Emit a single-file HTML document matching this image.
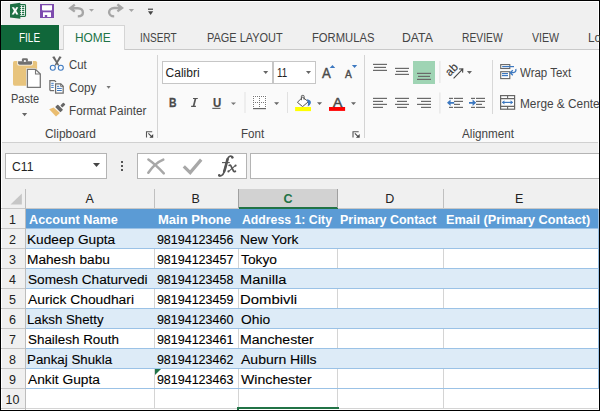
<!DOCTYPE html>
<html><head><meta charset="utf-8"><style>
html,body{margin:0;padding:0;width:600px;height:411px;overflow:hidden;background:#F0F0F0}
.b{position:absolute;display:block}
.t{position:absolute;white-space:pre;transform-origin:0 0;font-family:"Liberation Sans",sans-serif}
</style></head><body>
<div class="b" style="left:0px;top:0px;width:600px;height:411px;background:#F0F0F0;"></div><div class="b" style="left:1px;top:1px;width:598px;height:1px;background:#FFF;"></div><div class="b" style="left:1px;top:1px;width:1px;height:409px;background:#FFF;"></div><div class="b" style="left:598px;top:1px;width:1px;height:409px;background:#FFF;"></div><div class="b" style="left:1px;top:409px;width:598px;height:1px;background:#FFF;"></div><div class="b" style="left:2px;top:50px;width:596px;height:92px;background:#FAFAFA;"></div><div class="b" style="left:2px;top:49px;width:597px;height:1px;background:#C9C9C9;"></div><div class="b" style="left:2px;top:142px;width:596px;height:1px;background:#D0D0D0;"></div><div class="b" style="left:1px;top:25px;width:58px;height:25px;background:#10673A;"></div><div class="b" style="left:63px;top:25px;width:62px;height:25px;background:#FAFAFA;border:1px solid #D5D5D5;border-bottom:none;box-sizing:border-box"></div><div class="b" style="left:157px;top:55px;width:1px;height:83px;background:#D4D4D4;"></div><div class="b" style="left:364px;top:55px;width:1px;height:83px;background:#D4D4D4;"></div><div class="b" style="left:5px;top:153px;width:102px;height:26px;background:#FFFFFF;border:1px solid #B4B4B4;box-sizing:border-box"></div><div class="b" style="left:137px;top:153px;width:110px;height:26px;background:#FFFFFF;border:1px solid #B4B4B4;box-sizing:border-box"></div><div class="b" style="left:250px;top:153px;width:350px;height:26px;background:#FFFFFF;border:1px solid #B4B4B4;border-right:none;box-sizing:border-box"></div><div class="b" style="left:2px;top:189px;width:596px;height:19px;background:#F0F0F0;"></div><div class="b" style="left:239px;top:189px;width:98px;height:19px;background:#D2D2D2;"></div><div class="b" style="left:1px;top:208px;width:597px;height:1px;background:#C8C8C8;"></div><div class="b" style="left:239px;top:207px;width:99px;height:2px;background:#217346;"></div><div class="b" style="left:154px;top:189px;width:1px;height:19px;background:#C0C0C0;"></div><div class="b" style="left:238px;top:189px;width:1px;height:19px;background:#A0A0A0;"></div><div class="b" style="left:337px;top:189px;width:1px;height:19px;background:#A0A0A0;"></div><div class="b" style="left:443px;top:189px;width:1px;height:19px;background:#C0C0C0;"></div><div class="b" style="left:2px;top:209px;width:23px;height:200px;background:#F0F0F0;"></div><div class="b" style="left:25px;top:189px;width:1px;height:221px;background:#BDBDBD;"></div><div class="b" style="left:26px;top:209px;width:572px;height:200px;background:#FFFFFF;"></div><div class="b" style="left:154px;top:209px;width:1px;height:200px;background:#D4D4D4;"></div><div class="b" style="left:238px;top:209px;width:1px;height:200px;background:#D4D4D4;"></div><div class="b" style="left:337px;top:209px;width:1px;height:200px;background:#D4D4D4;"></div><div class="b" style="left:443px;top:209px;width:1px;height:200px;background:#D4D4D4;"></div><div class="b" style="left:1px;top:228px;width:24px;height:1px;background:#C8C8C8;"></div><div class="b" style="left:26px;top:228px;width:572px;height:1px;background:#D4D4D4;"></div><div class="b" style="left:1px;top:248px;width:24px;height:1px;background:#C8C8C8;"></div><div class="b" style="left:26px;top:248px;width:572px;height:1px;background:#D4D4D4;"></div><div class="b" style="left:1px;top:268px;width:24px;height:1px;background:#C8C8C8;"></div><div class="b" style="left:26px;top:268px;width:572px;height:1px;background:#D4D4D4;"></div><div class="b" style="left:1px;top:288px;width:24px;height:1px;background:#C8C8C8;"></div><div class="b" style="left:26px;top:288px;width:572px;height:1px;background:#D4D4D4;"></div><div class="b" style="left:1px;top:308px;width:24px;height:1px;background:#C8C8C8;"></div><div class="b" style="left:26px;top:308px;width:572px;height:1px;background:#D4D4D4;"></div><div class="b" style="left:1px;top:328px;width:24px;height:1px;background:#C8C8C8;"></div><div class="b" style="left:26px;top:328px;width:572px;height:1px;background:#D4D4D4;"></div><div class="b" style="left:1px;top:348px;width:24px;height:1px;background:#C8C8C8;"></div><div class="b" style="left:26px;top:348px;width:572px;height:1px;background:#D4D4D4;"></div><div class="b" style="left:1px;top:368px;width:24px;height:1px;background:#C8C8C8;"></div><div class="b" style="left:26px;top:368px;width:572px;height:1px;background:#D4D4D4;"></div><div class="b" style="left:1px;top:388px;width:24px;height:1px;background:#C8C8C8;"></div><div class="b" style="left:26px;top:388px;width:572px;height:1px;background:#D4D4D4;"></div><div class="b" style="left:1px;top:408px;width:24px;height:1px;background:#C8C8C8;"></div><div class="b" style="left:26px;top:408px;width:572px;height:1px;background:#D4D4D4;"></div><div class="b" style="left:26px;top:209px;width:572px;height:19px;background:#5B9BD5;"></div><div class="b" style="left:26px;top:229px;width:572px;height:19px;background:#DDEBF7;"></div><div class="b" style="left:26px;top:228px;width:572px;height:1px;background:#9BC2E6;"></div><div class="b" style="left:26px;top:248px;width:572px;height:1px;background:#9BC2E6;"></div><div class="b" style="left:26px;top:269px;width:572px;height:19px;background:#DDEBF7;"></div><div class="b" style="left:26px;top:268px;width:572px;height:1px;background:#9BC2E6;"></div><div class="b" style="left:26px;top:288px;width:572px;height:1px;background:#9BC2E6;"></div><div class="b" style="left:26px;top:309px;width:572px;height:19px;background:#DDEBF7;"></div><div class="b" style="left:26px;top:308px;width:572px;height:1px;background:#9BC2E6;"></div><div class="b" style="left:26px;top:328px;width:572px;height:1px;background:#9BC2E6;"></div><div class="b" style="left:26px;top:349px;width:572px;height:19px;background:#DDEBF7;"></div><div class="b" style="left:26px;top:348px;width:572px;height:1px;background:#9BC2E6;"></div><div class="b" style="left:26px;top:368px;width:572px;height:1px;background:#9BC2E6;"></div><div class="b" style="left:26px;top:388px;width:572px;height:1px;background:#9BC2E6;"></div><svg class="b" style="left:155px;top:369px" width="6" height="6" viewBox="0 0 6 6"><path d="M0 0H6L0 6Z" fill="#217346"/></svg><div class="b" style="left:237px;top:407px;width:102px;height:2px;background:#217346;"></div><div class="b" style="left:237px;top:409px;width:2px;height:1px;background:#217346;"></div><svg class="b" style="left:0;top:0" width="600" height="411" viewBox="0 0 600 411"><path d="M10 4.3L20.3 2.8V18.8L10 17.6Z" fill="#1D7044"/><rect x="19.6" y="4.6" width="5.9" height="11.8" rx="0.8" fill="#fff" stroke="#1D7044" stroke-width="1.1"/><rect x="22" y="5.8" width="2.3" height="1.2" rx="0.5" fill="#1D7044"/><rect x="19.8" y="5.8" width="1.4" height="1.2" rx="0.5" fill="#1D7044"/><rect x="22" y="7.8" width="2.3" height="1.2" rx="0.5" fill="#1D7044"/><rect x="19.8" y="7.8" width="1.4" height="1.2" rx="0.5" fill="#1D7044"/><rect x="22" y="9.8" width="2.3" height="1.2" rx="0.5" fill="#1D7044"/><rect x="19.8" y="9.8" width="1.4" height="1.2" rx="0.5" fill="#1D7044"/><rect x="22" y="11.8" width="2.3" height="1.2" rx="0.5" fill="#1D7044"/><rect x="19.8" y="11.8" width="1.4" height="1.2" rx="0.5" fill="#1D7044"/><rect x="22" y="13.8" width="2.3" height="1.2" rx="0.5" fill="#1D7044"/><rect x="19.8" y="13.8" width="1.4" height="1.2" rx="0.5" fill="#1D7044"/><path d="M11.8 7.2H14.1L15.1 9.3L16.1 7.2H18.3L16.3 10.7L18.4 14.5H16.1L15.1 12.3L14 14.5H11.7L13.9 10.7Z" fill="#fff"/><rect x="40" y="4" width="14" height="14" fill="#7D4BAE"/><path d="M42 5.2H52V9.4Q52 10.4 51 10.4H43Q42 10.4 42 9.4Z" fill="#fff"/><rect x="43" y="12.3" width="8" height="4.7" fill="#fff"/><rect x="44.8" y="15" width="2.4" height="2" fill="#7D4BAE"/><path d="M74.8 4.6L70.2 8.2L74.8 11.6M70.4 8.2H77.8C81 8.2 82.9 10.3 82.9 12.4C82.9 14.6 81 16.3 77.8 16.4" stroke="#A6A6A6" stroke-width="2.4" fill="none"/><path d="M89 9H94L91.5 11.8Z" fill="#A6A6A6"/><path d="M117.4 4.4L122 8L117.4 11.4M121.8 8H114.2C111 8 109.1 10.1 109.1 12.2C109.1 14.4 111 16.3 114.2 16.4" stroke="#A6A6A6" stroke-width="2.4" fill="none"/><path d="M128.7 9H134.1L131.39999999999998 12Z" fill="#A6A6A6"/><rect x="148" y="8.6" width="5" height="1.2" fill="#444"/><path d="M148 11.2H153.2L150.6 15Z" fill="#444"/><rect x="13" y="61" width="24.1" height="24.7" rx="1.6" fill="#E8C47D"/><path d="M17.3 60.6H32.8V64Q32.8 65.6 31.2 65.6H18.9Q17.3 65.6 17.3 64Z" fill="#FAFAFA"/><path d="M18.1 61.2H32V63.3Q32 64.7 30.6 64.7H19.5Q18.1 64.7 18.1 63.3Z" fill="#707070"/><path d="M21.9 61.5V59.6Q21.9 58.2 23.3 58.2H26.5Q27.9 58.2 27.9 59.6V61.5Z" fill="#707070"/><circle cx="24.9" cy="61" r="1.1" fill="#FAFAFA"/><path d="M26.2 68.3H35.8L41.4 73.6V88.4H26.2Z" fill="#FAFAFA"/><path d="M27.4 69.4H35.5L40.3 74V87.3H27.4Z" fill="#fff" stroke="#777" stroke-width="1.3"/><path d="M35.5 69.4V74H40.3" fill="none" stroke="#777" stroke-width="1.1"/><path d="M22 113H27.2L24.6 116.2Z" fill="#666"/><path d="M52.2 57L54.4 56.2L59.4 65.4L57.8 65.6Z" fill="#666"/><path d="M61.6 57L59.4 56.2L54.4 65.4L56 65.6Z" fill="#666"/><circle cx="52.8" cy="67.8" r="2.5" stroke="#3C78C0" stroke-width="1.1" fill="none"/><circle cx="60.8" cy="67.8" r="2.5" stroke="#3C78C0" stroke-width="1.1" fill="none"/><path d="M49.9 90.6V80.6H54.6L56 82V90.6Z" fill="#fff"/><path d="M49.9 90.6V80.6H54.6L56 82" stroke="#6D6D6D" stroke-width="1.25" fill="none"/><path d="M49.9 90.6H54.5" stroke="#6D6D6D" stroke-width="1.25" fill="none"/><rect x="51.2" y="82.8" width="2.5" height="1" fill="#3C78C0"/><rect x="51.2" y="84.8" width="2.5" height="1" fill="#3C78C0"/><rect x="51.2" y="86.9" width="2.5" height="1" fill="#3C78C0"/><path d="M55.6 83.8H60.8L63.2 86.2V93.2H55.6Z" fill="#fff" stroke="#FAFAFA" stroke-width="2.6"/><path d="M55.6 83.8H60.8L63.2 86.2V93.2H55.6Z" fill="#fff" stroke="#6D6D6D" stroke-width="1.25"/><path d="M60.6 83.8V86.4H63.2" fill="none" stroke="#6D6D6D" stroke-width="0.9"/><rect x="57" y="85.8" width="2.2" height="1" fill="#3C78C0"/><rect x="57" y="87.9" width="4.8" height="1" fill="#3C78C0"/><rect x="57" y="90" width="4.8" height="1" fill="#3C78C0"/><path d="M106.5 86H110.7L108.6 88.7Z" fill="#777"/><path d="M49.2 109.3L53.6 107.6L59.9 113L56 116.5Z" fill="#EABD70"/><rect x="-3.8" y="-1.9" width="7.6" height="3.8" rx="0.8" fill="#666" transform="translate(59.1 108.4) rotate(45)"/><rect x="-2.2" y="-1.5" width="4.4" height="3" rx="0.8" fill="#666" transform="translate(62.9 105) rotate(-45)"/><path d="M146.5 137.6V131.7H152.2" stroke="#555" stroke-width="1.1" fill="none"/><path d="M148.4 133.4L151.6 136.6" stroke="#444" stroke-width="1.1" fill="none"/><path d="M153.2 137.8H149.4L153.2 134Z" fill="#444"/><path d="M353.0 137.6V131.7H358.7" stroke="#555" stroke-width="1.1" fill="none"/><path d="M354.9 133.4L358.1 136.6" stroke="#444" stroke-width="1.1" fill="none"/><path d="M359.7 137.8H355.9L359.7 134Z" fill="#444"/><rect x="162.5" y="61.5" width="110" height="22" fill="#fff" stroke="#C6C6C6"/><rect x="273.5" y="61.5" width="42" height="22" fill="#fff" stroke="#C6C6C6"/><path d="M263.2 71.1H268.2L265.7 73.9Z" fill="#666"/><path d="M306 71.1H311L308.5 73.9Z" fill="#666"/><path d="M329.7 67.9H335.2L332.45 65Z" fill="#3C78C0"/><path d="M351.9 65H357.2L354.55 68.1Z" fill="#3C78C0"/><rect x="212.3" y="107.8" width="8.2" height="1.1" fill="#555"/><path d="M230.9 102.4H236L233.45 104.9Z" fill="#777"/><path d="M274.1 102.2H279.1L276.6 104.9Z" fill="#666"/><path d="M317 102.2H322.1L319.55 104.9Z" fill="#666"/><path d="M351 102.2H356L353.5 104.9Z" fill="#666"/><rect x="244.5" y="92" width="1" height="21" fill="#E1E1E1"/><rect x="287" y="92" width="1" height="21" fill="#E1E1E1"/><rect x="252" y="95" width="15" height="14" fill="#fff"/><rect x="253" y="96" width="1" height="1" fill="#777"/><rect x="253" y="98" width="1" height="1" fill="#777"/><rect x="253" y="100" width="1" height="1" fill="#777"/><rect x="253" y="102" width="1" height="1" fill="#777"/><rect x="253" y="104" width="1" height="1" fill="#777"/><rect x="253" y="106" width="1" height="1" fill="#777"/><rect x="255" y="96" width="1" height="1" fill="#777"/><rect x="255" y="102" width="1" height="1" fill="#777"/><rect x="257" y="96" width="1" height="1" fill="#777"/><rect x="257" y="102" width="1" height="1" fill="#777"/><rect x="259" y="96" width="1" height="1" fill="#777"/><rect x="259" y="98" width="1" height="1" fill="#777"/><rect x="259" y="100" width="1" height="1" fill="#777"/><rect x="259" y="102" width="1" height="1" fill="#777"/><rect x="259" y="104" width="1" height="1" fill="#777"/><rect x="259" y="106" width="1" height="1" fill="#777"/><rect x="261" y="96" width="1" height="1" fill="#777"/><rect x="261" y="102" width="1" height="1" fill="#777"/><rect x="263" y="96" width="1" height="1" fill="#777"/><rect x="263" y="102" width="1" height="1" fill="#777"/><rect x="265" y="96" width="1" height="1" fill="#777"/><rect x="265" y="98" width="1" height="1" fill="#777"/><rect x="265" y="100" width="1" height="1" fill="#777"/><rect x="265" y="102" width="1" height="1" fill="#777"/><rect x="265" y="104" width="1" height="1" fill="#777"/><rect x="265" y="106" width="1" height="1" fill="#777"/><rect x="253" y="108" width="13" height="1.2" fill="#666"/><path d="M297.4 102.3L302.6 97.2L308.4 101.7L302.6 106.6Z" fill="#fff" stroke="#555" stroke-width="1"/><path d="M301.4 100.2V96.3Q301.4 95.4 302.3 95.4H303.2Q304.1 95.4 304.1 96.3V99.6" stroke="#555" stroke-width="1" fill="none"/><path d="M306.8 99.2Q311.3 99.6 310.9 103Q310.3 105.3 307.8 106.4Q308.8 103.2 306.8 99.2Z" fill="#3C78C0"/><rect x="295.1" y="107" width="15.9" height="4.1" fill="#FFFF00"/><rect x="329" y="107" width="16.1" height="3.9" fill="#FF0000"/><rect x="373" y="63.8" width="14" height="1.2" fill="#6A6A6A"/><rect x="374" y="66.8" width="12" height="1.2" fill="#6A6A6A"/><rect x="373" y="69.8" width="14" height="1.2" fill="#6A6A6A"/><rect x="395" y="67.8" width="14" height="1.2" fill="#6A6A6A"/><rect x="396" y="70.8" width="12" height="1.2" fill="#6A6A6A"/><rect x="395" y="73.8" width="14" height="1.2" fill="#6A6A6A"/><rect x="413" y="61" width="22" height="23" fill="#9FD4B4"/><rect x="417" y="72.8" width="14" height="1.2" fill="#6A6A6A"/><rect x="418" y="75.8" width="12" height="1.2" fill="#6A6A6A"/><rect x="417" y="78.8" width="14" height="1.2" fill="#6A6A6A"/><rect x="439.4" y="61" width="1" height="22" fill="#E1E1E1"/><rect x="439.4" y="92.5" width="1" height="21" fill="#E1E1E1"/><rect x="373" y="97.8" width="14" height="1.2" fill="#6A6A6A"/><rect x="373" y="100.8" width="10" height="1.2" fill="#6A6A6A"/><rect x="373" y="103.8" width="14" height="1.2" fill="#6A6A6A"/><rect x="373" y="106.8" width="10" height="1.2" fill="#6A6A6A"/><rect x="395" y="97.8" width="14" height="1.2" fill="#6A6A6A"/><rect x="397" y="100.8" width="10" height="1.2" fill="#6A6A6A"/><rect x="395" y="103.8" width="14" height="1.2" fill="#6A6A6A"/><rect x="397" y="106.8" width="10" height="1.2" fill="#6A6A6A"/><rect x="417" y="97.8" width="14" height="1.2" fill="#6A6A6A"/><rect x="421" y="100.8" width="10" height="1.2" fill="#6A6A6A"/><rect x="417" y="103.8" width="14" height="1.2" fill="#6A6A6A"/><rect x="421" y="106.8" width="10" height="1.2" fill="#6A6A6A"/><path d="M453.6 78.4L462.6 69.2M459 69L462.8 68.8L462.6 72.6" stroke="#444" stroke-width="1.1" fill="none"/><path d="M466.9 71H472L469.45 74Z" fill="#666"/><rect x="449" y="97.8" width="4" height="1.2" fill="#6A6A6A"/><rect x="454" y="97.8" width="9" height="1.2" fill="#6A6A6A"/><rect x="454" y="100.8" width="9" height="1.2" fill="#6A6A6A"/><rect x="454" y="103.8" width="6" height="1.2" fill="#6A6A6A"/><rect x="449" y="106.8" width="4" height="1.2" fill="#6A6A6A"/><rect x="454" y="106.8" width="9" height="1.2" fill="#6A6A6A"/><rect x="471" y="97.8" width="4" height="1.2" fill="#6A6A6A"/><rect x="476" y="97.8" width="9" height="1.2" fill="#6A6A6A"/><rect x="476" y="100.8" width="9" height="1.2" fill="#6A6A6A"/><rect x="476" y="103.8" width="6" height="1.2" fill="#6A6A6A"/><rect x="471" y="106.8" width="4" height="1.2" fill="#6A6A6A"/><rect x="476" y="106.8" width="9" height="1.2" fill="#6A6A6A"/><path d="M447 102.8L450.6 99.6V101.9H454.2V103.7H450.6V106Z" fill="#3C78C0"/><path d="M476.2 102.8L472.6 99.6V101.9H469V103.7H472.6V106Z" fill="#3C78C0"/><rect x="492" y="60" width="1" height="54" fill="#D8D8D8"/><rect x="500.7" y="64.6" width="9.1" height="3.9" fill="#fff" stroke="#666" stroke-width="1.1"/><rect x="500.7" y="71.7" width="9.1" height="6.9" fill="#fff" stroke="#666" stroke-width="1.1"/><rect x="502.2" y="66" width="11.800000000000011" height="1.2" fill="#3C78C0"/><rect x="502" y="73" width="6" height="1.2" fill="#3C78C0"/><rect x="502" y="75" width="6" height="1.2" fill="#3C78C0"/><path d="M515.8 69C516.6 71.8 514.8 72.8 510.4 72.7M512.8 70.2L510.2 72.7L512.8 75.2" stroke="#3C78C0" stroke-width="1.3" fill="none"/><rect x="500.6" y="95.6" width="14" height="13.6" fill="#fff" stroke="#666" stroke-width="1.2"/><path d="M500.6 98.6H514.6M500.6 106.4H514.6M507.6 95.6V98.6M507.6 106.4V109.2" stroke="#666" stroke-width="1.1"/><path d="M502.3 102.4H512.7" stroke="#3C78C0" stroke-width="1.2"/><path d="M502 102.4L504.4 100.3V104.5Z M513 102.4L510.6 100.3V104.5Z" fill="#3C78C0"/><path d="M93 163H100L96.5 167Z" fill="#444"/><rect x="121" y="161" width="2" height="2" fill="#555"/><rect x="121" y="165" width="2" height="2" fill="#555"/><rect x="121" y="169" width="2" height="2" fill="#555"/><path d="M148.4 159.5Q155 164 163.8 173.3M163.3 159.6Q155 163 148.3 172.7" stroke="#A8A8A8" stroke-width="2.5" fill="none" stroke-linecap="round"/><path d="M183.8 166.4L190.2 172.6L201.2 159.6" stroke="#A8A8A8" stroke-width="3.2" fill="none"/><path d="M193 98.5H197.8M191.1 106.4H195.9" stroke="#555" stroke-width="1.1"/><path d="M194.6 98.6L196.4 98.6L194.4 106.4L192.6 106.4Z" fill="#555"/><path d="M232.6 157.4C232 155.8 229.8 155.4 228.3 157.6C226.9 159.8 225.4 168 223.9 172.4C222.9 175.2 220.8 176.5 218.9 175.4" stroke="#555" stroke-width="1.7" fill="none" stroke-linecap="round"/><circle cx="232.3" cy="157.4" r="1.2" fill="#555"/><circle cx="219.3" cy="175.2" r="1.2" fill="#555"/><path d="M222 162.6H229.8" stroke="#555" stroke-width="1.1"/><path d="M227.6 159.2C226.6 162.4 225.6 167.6 224.2 171.4" stroke="#555" stroke-width="2.6" fill="none" stroke-linecap="round"/><path d="M229.2 165.4Q230.2 164.6 230.8 165.6L233.6 171.2Q234.2 172 235.4 171.2" stroke="#555" stroke-width="1.7" fill="none" stroke-linecap="round"/><path d="M235.6 165.4L228.4 171.6" stroke="#555" stroke-width="1.1" fill="none"/><circle cx="235.6" cy="165.6" r="1.05" fill="#555"/><circle cx="228.4" cy="171.4" r="1.05" fill="#555"/><path d="M10.5 204.5H21.9V193.4Z" fill="#C6C6C6"/></svg><div class="b" style="left:0px;top:0px;width:600px;height:1px;background:#000;"></div><div class="b" style="left:0px;top:410px;width:600px;height:1px;background:#000;"></div><div class="b" style="left:0px;top:0px;width:1px;height:411px;background:#000;"></div><div class="b" style="left:599px;top:0px;width:1px;height:411px;background:#000;"></div><div class="b" style="left:598px;top:209px;width:1px;height:180px;background:#9BC2E6;"></div><span class="t" style="left:19.00px;top:31.80px;font-size:12.5px;line-height:12.5px;font-weight:400;font-family:'Liberation Sans',sans-serif;color:#FFFFFF;transform:scaleX(0.7981);">FILE</span><span class="t" style="left:75.35px;top:32.00px;font-size:12.5px;line-height:12.5px;font-weight:400;font-family:'Liberation Sans',sans-serif;color:#217346;transform:scaleX(0.9513);">HOME</span><span class="t" style="left:139.70px;top:32.00px;font-size:12.5px;line-height:12.5px;font-weight:400;font-family:'Liberation Sans',sans-serif;color:#444;transform:scaleX(0.8049);">INSERT</span><span class="t" style="left:207.02px;top:32.00px;font-size:12.5px;line-height:12.5px;font-weight:400;font-family:'Liberation Sans',sans-serif;color:#444;transform:scaleX(0.8760);">PAGE LAYOUT</span><span class="t" style="left:312.10px;top:32.00px;font-size:12.5px;line-height:12.5px;font-weight:400;font-family:'Liberation Sans',sans-serif;color:#444;transform:scaleX(0.8992);">FORMULAS</span><span class="t" style="left:402.27px;top:32.00px;font-size:12.5px;line-height:12.5px;font-weight:400;font-family:'Liberation Sans',sans-serif;color:#444;transform:scaleX(0.9793);">DATA</span><span class="t" style="left:462.18px;top:32.00px;font-size:12.5px;line-height:12.5px;font-weight:400;font-family:'Liberation Sans',sans-serif;color:#444;transform:scaleX(0.8245);">REVIEW</span><span class="t" style="left:532.00px;top:32.00px;font-size:12.5px;line-height:12.5px;font-weight:400;font-family:'Liberation Sans',sans-serif;color:#444;transform:scaleX(0.8476);">VIEW</span><span class="t" style="left:587.80px;top:32.00px;font-size:12.5px;line-height:12.5px;font-weight:400;font-family:'Liberation Sans',sans-serif;color:#444;transform:scaleX(0.9458);">Lo</span><span class="t" style="left:10.72px;top:93.00px;font-size:12.5px;line-height:12.5px;font-weight:400;font-family:'Liberation Sans',sans-serif;color:#444;transform:scaleX(0.8835);">Paste</span><span class="t" style="left:68.50px;top:59.00px;font-size:12px;line-height:12px;font-weight:400;font-family:'Liberation Sans',sans-serif;color:#444;transform:scaleX(0.9462);">Cut</span><span class="t" style="left:68.50px;top:82.00px;font-size:12px;line-height:12px;font-weight:400;font-family:'Liberation Sans',sans-serif;color:#444;transform:scaleX(0.9817);">Copy</span><span class="t" style="left:68.50px;top:104.70px;font-size:12px;line-height:12px;font-weight:400;font-family:'Liberation Sans',sans-serif;color:#444;transform:scaleX(0.9753);">Format Painter</span><span class="t" style="left:45.40px;top:127.80px;font-size:12px;line-height:12px;font-weight:400;font-family:'Liberation Sans',sans-serif;color:#444;transform:scaleX(0.9923);">Clipboard</span><span class="t" style="left:165.60px;top:66.60px;font-size:12px;line-height:12px;font-weight:400;font-family:'Liberation Sans',sans-serif;color:#222;">Calibri</span><span class="t" style="left:276.60px;top:66.60px;font-size:12px;line-height:12px;font-weight:400;font-family:'Liberation Sans',sans-serif;color:#222;transform:scaleX(0.8136);">11</span><span class="t" style="left:241.20px;top:128.00px;font-size:12px;line-height:12px;font-weight:400;font-family:'Liberation Sans',sans-serif;color:#444;transform:scaleX(0.9644);">Font</span><span class="t" style="left:519.50px;top:67.00px;font-size:12px;line-height:12px;font-weight:400;font-family:'Liberation Sans',sans-serif;color:#444;transform:scaleX(0.9566);">Wrap Text</span><span class="t" style="left:519.50px;top:97.70px;font-size:12px;line-height:12px;font-weight:400;font-family:'Liberation Sans',sans-serif;color:#444;transform:scaleX(0.9872);">Merge &amp; Cente</span><span class="t" style="left:168.80px;top:96.60px;font-size:12.5px;line-height:12.5px;font-weight:700;font-family:'Liberation Sans',sans-serif;color:#4A4A4A;transform:scaleX(0.8333);-webkit-text-stroke:0.3px #4A4A4A;">B</span><span class="t" style="left:212.50px;top:96.60px;font-size:12px;line-height:12px;font-weight:700;font-family:'Liberation Sans',sans-serif;color:#4A4A4A;transform:scaleX(0.9500);-webkit-text-stroke:0.2px #4A4A4A;">U</span><span class="t" style="left:332.90px;top:95.70px;font-size:13.5px;line-height:13.5px;font-weight:400;font-family:'Liberation Sans',sans-serif;color:#4A4A4A;transform:scaleX(1.0333);-webkit-text-stroke:0.5px #4A4A4A;">A</span><span class="t" style="left:322.40px;top:66.00px;font-size:14px;line-height:14px;font-weight:400;font-family:'Liberation Sans',sans-serif;color:#4A4A4A;transform:scaleX(0.9400);-webkit-text-stroke:0.4px #4A4A4A;">A</span><span class="t" style="left:345.10px;top:69.00px;font-size:11px;line-height:11px;font-weight:400;font-family:'Liberation Sans',sans-serif;color:#4A4A4A;transform:scaleX(0.9250);-webkit-text-stroke:0.4px #4A4A4A;">A</span><span class="t" style="left:462.10px;top:128.10px;font-size:12px;line-height:12px;font-weight:400;font-family:'Liberation Sans',sans-serif;color:#444;transform:scaleX(0.9736);">Alignment</span><span class="t" style="left:12.40px;top:161.00px;font-size:12.5px;line-height:12.5px;font-weight:400;font-family:'Liberation Sans',sans-serif;color:#222;transform:scaleX(0.9750);">C11</span><span class="t" style="left:85.40px;top:192.60px;font-size:12.5px;line-height:12.5px;font-weight:400;font-family:'Liberation Sans',sans-serif;color:#222;">A</span><span class="t" style="left:191.50px;top:192.60px;font-size:12.5px;line-height:12.5px;font-weight:400;font-family:'Liberation Sans',sans-serif;color:#222;">B</span><span class="t" style="left:385.20px;top:192.60px;font-size:12.5px;line-height:12.5px;font-weight:400;font-family:'Liberation Sans',sans-serif;color:#222;">D</span><span class="t" style="left:515.10px;top:192.60px;font-size:12.5px;line-height:12.5px;font-weight:400;font-family:'Liberation Sans',sans-serif;color:#222;">E</span><span class="t" style="left:283.60px;top:192.60px;font-size:12.5px;line-height:12.5px;font-weight:700;font-family:'Liberation Sans',sans-serif;color:#217346;">C</span><span class="t" style="left:9.10px;top:214.00px;font-size:12.5px;line-height:12.5px;font-weight:400;font-family:'Liberation Sans',sans-serif;color:#222;">1</span><span class="t" style="left:9.10px;top:234.00px;font-size:12.5px;line-height:12.5px;font-weight:400;font-family:'Liberation Sans',sans-serif;color:#222;">2</span><span class="t" style="left:9.10px;top:254.00px;font-size:12.5px;line-height:12.5px;font-weight:400;font-family:'Liberation Sans',sans-serif;color:#222;">3</span><span class="t" style="left:9.10px;top:274.00px;font-size:12.5px;line-height:12.5px;font-weight:400;font-family:'Liberation Sans',sans-serif;color:#222;">4</span><span class="t" style="left:9.10px;top:294.00px;font-size:12.5px;line-height:12.5px;font-weight:400;font-family:'Liberation Sans',sans-serif;color:#222;">5</span><span class="t" style="left:9.10px;top:314.00px;font-size:12.5px;line-height:12.5px;font-weight:400;font-family:'Liberation Sans',sans-serif;color:#222;">6</span><span class="t" style="left:9.10px;top:334.00px;font-size:12.5px;line-height:12.5px;font-weight:400;font-family:'Liberation Sans',sans-serif;color:#222;">7</span><span class="t" style="left:9.10px;top:354.00px;font-size:12.5px;line-height:12.5px;font-weight:400;font-family:'Liberation Sans',sans-serif;color:#222;">8</span><span class="t" style="left:9.10px;top:374.00px;font-size:12.5px;line-height:12.5px;font-weight:400;font-family:'Liberation Sans',sans-serif;color:#222;">9</span><span class="t" style="left:5.62px;top:394.00px;font-size:12.5px;line-height:12.5px;font-weight:400;font-family:'Liberation Sans',sans-serif;color:#222;">10</span><span class="t" style="left:28.80px;top:214.30px;font-size:12.5px;line-height:12.5px;font-weight:700;font-family:'Liberation Sans',sans-serif;color:#FFFFFF;transform:scaleX(1.0141);">Account Name</span><span class="t" style="left:158.10px;top:214.30px;font-size:12.5px;line-height:12.5px;font-weight:700;font-family:'Liberation Sans',sans-serif;color:#FFFFFF;transform:scaleX(1.0415);">Main Phone</span><span class="t" style="left:242.00px;top:214.30px;font-size:12.5px;line-height:12.5px;font-weight:700;font-family:'Liberation Sans',sans-serif;color:#FFFFFF;transform:scaleX(0.9810);">Address 1: City</span><span class="t" style="left:340.30px;top:214.30px;font-size:12.5px;line-height:12.5px;font-weight:700;font-family:'Liberation Sans',sans-serif;color:#FFFFFF;transform:scaleX(0.9980);">Primary Contact</span><span class="t" style="left:446.30px;top:214.30px;font-size:12.5px;line-height:12.5px;font-weight:700;font-family:'Liberation Sans',sans-serif;color:#FFFFFF;transform:scaleX(1.0174);">Email (Primary Contact)</span><span class="t" style="left:27.21px;top:234.00px;font-size:12.5px;line-height:12.5px;font-weight:400;font-family:'Liberation Sans',sans-serif;color:#000;transform:scaleX(1.0933);-webkit-text-stroke:0.1px #000;">Kudeep Gupta</span><span class="t" style="left:156.90px;top:234.00px;font-size:12.5px;line-height:12.5px;font-weight:400;font-family:'Liberation Sans',sans-serif;color:#000;-webkit-text-stroke:0.1px #000;">98194123456</span><span class="t" style="left:240.29px;top:234.00px;font-size:12.5px;line-height:12.5px;font-weight:400;font-family:'Liberation Sans',sans-serif;color:#000;transform:scaleX(1.1064);-webkit-text-stroke:0.1px #000;">New York</span><span class="t" style="left:27.21px;top:254.00px;font-size:12.5px;line-height:12.5px;font-weight:400;font-family:'Liberation Sans',sans-serif;color:#000;transform:scaleX(1.0949);-webkit-text-stroke:0.1px #000;">Mahesh babu</span><span class="t" style="left:156.90px;top:254.00px;font-size:12.5px;line-height:12.5px;font-weight:400;font-family:'Liberation Sans',sans-serif;color:#000;-webkit-text-stroke:0.1px #000;">98194123457</span><span class="t" style="left:241.40px;top:254.00px;font-size:12.5px;line-height:12.5px;font-weight:400;font-family:'Liberation Sans',sans-serif;color:#000;transform:scaleX(1.1009);-webkit-text-stroke:0.1px #000;">Tokyo</span><span class="t" style="left:28.30px;top:274.00px;font-size:12.5px;line-height:12.5px;font-weight:400;font-family:'Liberation Sans',sans-serif;color:#000;transform:scaleX(1.0899);-webkit-text-stroke:0.1px #000;">Somesh Chaturvedi</span><span class="t" style="left:156.90px;top:274.00px;font-size:12.5px;line-height:12.5px;font-weight:400;font-family:'Liberation Sans',sans-serif;color:#000;-webkit-text-stroke:0.1px #000;">98194123458</span><span class="t" style="left:240.23px;top:274.00px;font-size:12.5px;line-height:12.5px;font-weight:400;font-family:'Liberation Sans',sans-serif;color:#000;transform:scaleX(1.1695);-webkit-text-stroke:0.1px #000;">Manilla</span><span class="t" style="left:28.30px;top:294.00px;font-size:12.5px;line-height:12.5px;font-weight:400;font-family:'Liberation Sans',sans-serif;color:#000;transform:scaleX(1.1051);-webkit-text-stroke:0.1px #000;">Aurick Choudhari</span><span class="t" style="left:156.90px;top:294.00px;font-size:12.5px;line-height:12.5px;font-weight:400;font-family:'Liberation Sans',sans-serif;color:#000;-webkit-text-stroke:0.1px #000;">98194123459</span><span class="t" style="left:240.21px;top:294.00px;font-size:12.5px;line-height:12.5px;font-weight:400;font-family:'Liberation Sans',sans-serif;color:#000;transform:scaleX(1.1897);-webkit-text-stroke:0.1px #000;">Dombivli</span><span class="t" style="left:27.24px;top:314.00px;font-size:12.5px;line-height:12.5px;font-weight:400;font-family:'Liberation Sans',sans-serif;color:#000;transform:scaleX(1.0595);-webkit-text-stroke:0.1px #000;">Laksh Shetty</span><span class="t" style="left:156.90px;top:314.00px;font-size:12.5px;line-height:12.5px;font-weight:400;font-family:'Liberation Sans',sans-serif;color:#000;-webkit-text-stroke:0.1px #000;">98194123460</span><span class="t" style="left:241.40px;top:314.00px;font-size:12.5px;line-height:12.5px;font-weight:400;font-family:'Liberation Sans',sans-serif;color:#000;transform:scaleX(1.1039);-webkit-text-stroke:0.1px #000;">Ohio</span><span class="t" style="left:28.30px;top:334.00px;font-size:12.5px;line-height:12.5px;font-weight:400;font-family:'Liberation Sans',sans-serif;color:#000;transform:scaleX(1.0728);-webkit-text-stroke:0.1px #000;">Shailesh Routh</span><span class="t" style="left:156.90px;top:334.00px;font-size:12.5px;line-height:12.5px;font-weight:400;font-family:'Liberation Sans',sans-serif;color:#000;-webkit-text-stroke:0.1px #000;">98194123461</span><span class="t" style="left:240.27px;top:334.00px;font-size:12.5px;line-height:12.5px;font-weight:400;font-family:'Liberation Sans',sans-serif;color:#000;transform:scaleX(1.1287);-webkit-text-stroke:0.1px #000;">Manchester</span><span class="t" style="left:27.23px;top:354.00px;font-size:12.5px;line-height:12.5px;font-weight:400;font-family:'Liberation Sans',sans-serif;color:#000;transform:scaleX(1.0651);-webkit-text-stroke:0.1px #000;">Pankaj Shukla</span><span class="t" style="left:156.90px;top:354.00px;font-size:12.5px;line-height:12.5px;font-weight:400;font-family:'Liberation Sans',sans-serif;color:#000;-webkit-text-stroke:0.1px #000;">98194123462</span><span class="t" style="left:241.40px;top:354.00px;font-size:12.5px;line-height:12.5px;font-weight:400;font-family:'Liberation Sans',sans-serif;color:#000;transform:scaleX(1.1216);-webkit-text-stroke:0.1px #000;">Auburn Hills</span><span class="t" style="left:28.30px;top:374.00px;font-size:12.5px;line-height:12.5px;font-weight:400;font-family:'Liberation Sans',sans-serif;color:#000;transform:scaleX(1.1016);-webkit-text-stroke:0.1px #000;">Ankit Gupta</span><span class="t" style="left:156.90px;top:374.00px;font-size:12.5px;line-height:12.5px;font-weight:400;font-family:'Liberation Sans',sans-serif;color:#000;-webkit-text-stroke:0.1px #000;">98194123463</span><span class="t" style="left:241.40px;top:374.00px;font-size:12.5px;line-height:12.5px;font-weight:400;font-family:'Liberation Sans',sans-serif;color:#000;transform:scaleX(1.1306);-webkit-text-stroke:0.1px #000;">Winchester</span><span class="t" style="left:451.9px;top:69.6px;font-size:11.5px;line-height:11.5px;color:#333;-webkit-text-stroke:0.15px #333;transform:translate(-50%,-50%) rotate(-45deg);transform-origin:50% 50%">ab</span>
</body></html>
